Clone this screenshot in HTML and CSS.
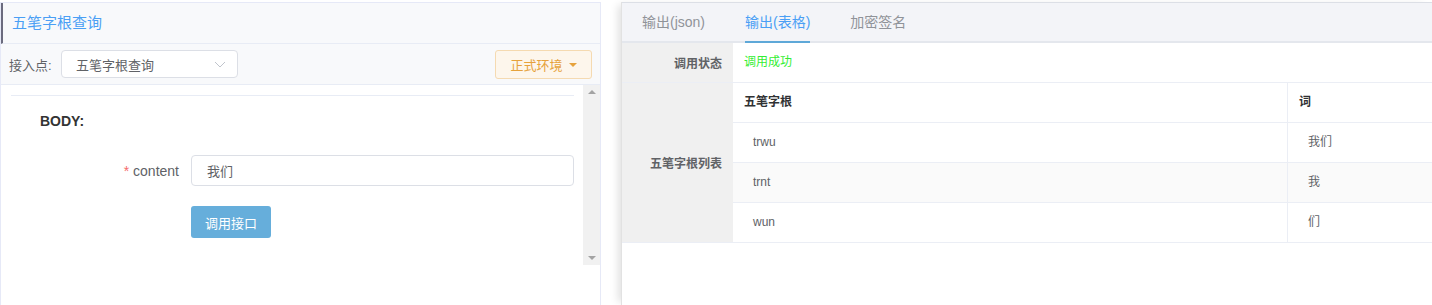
FILE: index.html
```html
<!DOCTYPE html>
<html lang="zh-CN">
<head>
    <meta charset="UTF-8">
    <title>五笔字根查询</title>
    <link rel="stylesheet" href="styles.css">
</head>
<body>
    <div class="page">
        <!-- 左侧：接口调用 -->
        <section class="left">
            <div class="left-head">五笔字根查询</div>
            <div class="toolbar">
                <span class="toolbar-label">接入点:</span>
                <div class="select">
                    <span>五笔字根查询</span>
                    <svg class="chevron" width="12" height="7" viewBox="0 0 12 7"><path d="M1 1 L6 6 L11 1" fill="none" stroke="#c0c4cc" stroke-width="1"/></svg>
                </div>
                <button class="env-btn">正式环境 <i class="caret"></i></button>
            </div>
            <div class="scroll">
                <div class="scroll-body">
                    <div class="section-title">BODY:</div>
                    <div class="form-row">
                        <label class="form-label"><span class="req">*</span> content</label>
                        <input class="form-input" type="text" value="我们">
                    </div>
                    <div class="form-row btn-row">
                        <span class="form-label"></span>
                        <button class="call-btn">调用接口</button>
                    </div>
                </div>
                <div class="scrollbar">
                    <i class="arrow up"></i>
                    <i class="arrow down"></i>
                </div>
            </div>
        </section>

        <!-- 右侧：输出结果 -->
        <section class="right">
            <div class="tabs">
                <div class="tab">输出(json)</div>
                <div class="tab active">输出(表格)</div>
                <div class="tab">加密签名</div>
            </div>
            <div class="result">
                <div class="row">
                    <div class="key">调用状态</div>
                    <div class="val ok">调用成功</div>
                </div>
                <div class="row">
                    <div class="key">五笔字根列表</div>
                    <div class="val nested">
                        <div class="cell head">五笔字根</div>
                        <div class="cell head last">词</div>
                        <div class="cell">trwu</div>
                        <div class="cell last">我们</div>
                        <div class="cell stripe">trnt</div>
                        <div class="cell last stripe">我</div>
                        <div class="cell">wun</div>
                        <div class="cell last">们</div>
                    </div>
                </div>
            </div>
        </section>
    </div>
</body>
</html>
```

FILE: styles.css
```css
body {
    margin: 0;
    background: #fff;
    font-family: "Liberation Sans", Arial, "Noto Sans CJK SC", sans-serif;
    color: #606266;
    overflow: hidden;
}
.page {
    display: flex;
    align-items: flex-start;
    padding-top: 2px;
    height: 303px;
}

/* 左侧面板 */
.left {
    width: 599px;
    height: 302px;
    border: 1px solid #e6e9f7;
    border-bottom: none;
    flex-shrink: 0;
}
.left-head {
    height: 40px;
    line-height: 40px;
    background: #f8f9fb;
    border-left: 2px solid #6b6b7e;
    border-bottom: 1px solid #e8ecf5;
    padding-left: 9px;
    font-size: 15px;
    color: #4a9ff5;
}
.toolbar {
    height: 40px;
    background: #f8f9fb;
    border-bottom: 1px solid #e8ecf5;
    display: flex;
    align-items: center;
    padding: 0 8px 0 8px;
    font-size: 13px;
}
.toolbar-label {
    width: 52px;
}
.select {
    width: 150px;
    height: 26px;
    border: 1px solid #dcdfe6;
    border-radius: 4px;
    background: #fff;
    display: flex;
    align-items: center;
    justify-content: space-between;
    padding: 0 11px 0 14px;
    font-size: 13px;
    color: #606266;
}
.chevron { margin-top: 1px; }
.env-btn {
    margin-left: auto;
    width: 97px;
    height: 29px;
    background: #fdf6ec;
    border: 1px solid #f5dab1;
    border-radius: 3px;
    color: #e6a23c;
    font-family: inherit;
    font-size: 13px;
    display: flex;
    align-items: center;
    justify-content: center;
    gap: 6px;
    padding: 0;
}
.caret {
    width: 0;
    height: 0;
    border-left: 4px solid transparent;
    border-right: 4px solid transparent;
    border-top: 4px solid #e6a23c;
    margin-top: 1px;
}
.scroll {
    height: 180px;
    display: flex;
}
.scroll-body {
    flex: 1;
    margin: 10px 9px 0 10px;
    border-top: 1px solid #e8ecf5;
}
.section-title {
    margin: 16px 0 0 29px;
    font-size: 14px;
    font-weight: bold;
    color: #333;
    line-height: 18px;
}
.form-row {
    display: flex;
    align-items: center;
    margin-top: 25px;
}
.form-label {
    width: 168px;
    padding-right: 12px;
    text-align: right;
    font-size: 14px;
    color: #606266;
}
.req { color: #f56c6c; }
.form-input {
    flex: 1;
    height: 31px;
    box-sizing: border-box;
    border: 1px solid #dcdfe6;
    border-radius: 4px;
    padding: 0 15px;
    font-family: inherit;
    font-size: 13px;
    color: #606266;
    outline: none;
}
.btn-row { margin-top: 20px; }
.call-btn {
    width: 80px;
    height: 32px;
    background: #66aedb;
    border: none;
    border-radius: 3px;
    color: #fff;
    font-family: inherit;
    font-size: 13px;
    padding: 0;
}
.scrollbar {
    width: 17px;
    background: #f1f1f1;
    display: flex;
    flex-direction: column;
    justify-content: space-between;
    align-items: center;
    padding: 5px 0;
    box-sizing: border-box;
}
.arrow {
    width: 0;
    height: 0;
    border-left: 4px solid transparent;
    border-right: 4px solid transparent;
}
.arrow.up { border-bottom: 4px solid #a3a3a3; }
.arrow.down { border-top: 4px solid #a3a3a3; }

/* 右侧面板 */
.right {
    flex: 1;
    margin-left: 20px;
    height: 303px;
    border-left: 1px solid #e2e2e2;
    box-shadow: -6px 0 8px -3px rgba(0, 0, 0, 0.12);
    font-size: 12px;
}
.tabs {
    height: 38px;
    border-top: 1px solid #dcdfe6;
    border-bottom: 2px solid #e4e7ed;
    background: #f3f4f8;
    display: flex;
}
.tab {
    padding: 0 20px;
    line-height: 38px;
    font-size: 14px;
    color: #909399;
    height: 38px;
}
.tab.active {
    color: #4a9ff5;
    box-shadow: inset 0 -2px 0 #5ea8d8;
    height: 40px;
    margin: 0 20px;
    padding: 0;
}
.row {
    display: flex;
    border-bottom: 1px solid #ebeef5;
}
.key {
    width: 100px;
    padding-right: 11px;
    background: #f0f0f0;
    display: flex;
    align-items: center;
    justify-content: flex-end;
    font-weight: bold;
    color: #606266;
}
.val {
    flex: 1;
    height: 39px;
    line-height: 39px;
    padding-left: 11px;
}
.ok { color: #33ee33; }
.nested {
    height: auto;
    padding: 0;
    display: grid;
    grid-template-columns: 555px 1fr;
}
.cell {
    height: 39px;
    line-height: 39px;
    border-bottom: 1px solid #ebeef5;
    border-right: 1px solid #ebeef5;
    padding-left: 20px;
    color: #606266;
}
.cell:nth-last-child(-n+2) { border-bottom: none; }
.cell.last { border-right: none; padding-left: 20px; }
.cell.head {
    padding-left: 11px;
    color: #303133;
    font-weight: bold;
}
.cell.stripe { background: #fafafa; }
```
